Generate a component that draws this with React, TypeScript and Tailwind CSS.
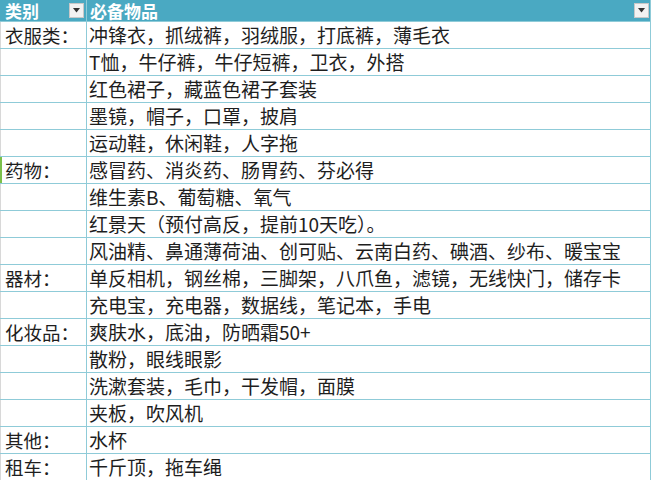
import React from "react";

const rows: [string, string][] = [
  ["衣服类：", "冲锋衣，抓绒裤，羽绒服，打底裤，薄毛衣"],
  ["", "T恤，牛仔裤，牛仔短裤，卫衣，外搭"],
  ["", "红色裙子，藏蓝色裙子套装"],
  ["", "墨镜，帽子，口罩，披肩"],
  ["", "运动鞋，休闲鞋，人字拖"],
  ["药物：", "感冒药、消炎药、肠胃药、芬必得"],
  ["", "维生素B、葡萄糖、氧气"],
  ["", "红景天（预付高反，提前10天吃）。"],
  ["", "风油精、鼻通薄荷油、创可贴、云南白药、碘酒、纱布、暖宝宝"],
  ["器材：", "单反相机，钢丝棉，三脚架，八爪鱼，滤镜，无线快门，储存卡"],
  ["", "充电宝，充电器，数据线，笔记本，手电"],
  ["化妆品：", "爽肤水，底油，防晒霜50+"],
  ["", "散粉，眼线眼影"],
  ["", "洗漱套装，毛巾，干发帽，面膜"],
  ["", "夹板，吹风机"],
  ["其他：", "水杯"],
  ["租车：", "千斤顶，拖车绳"],
];

function DropBtn() {
  return (
    <div className="w-[15px] h-[15px] bg-[#f2f2f2] border border-[#c8c8c8] flex items-center justify-center">
      <svg width="9" height="5" viewBox="0 0 9 5">
        <polygon points="1,0 8,0 4.5,4.5" fill="#333" />
      </svg>
    </div>
  );
}

export default function App() {
  return (
    <div
      className="w-[652px] h-[480px] bg-white overflow-hidden text-[#1e1e1e]"
      style={{ fontFamily: '"Noto Sans CJK SC", "Noto Sans", sans-serif' }}
    >
      <div className="w-[651px] border-r border-[#8fcbd8]">
        <div className="flex h-[22px] bg-[#4aa9c2] border-b border-[#8fcbd8] text-white font-bold text-[17px] leading-none">
          <div className="w-[87px] flex items-center justify-between pl-[5px] pr-[2px] border-r border-[#8fcbd8]">
            <span>类别</span>
            <DropBtn />
          </div>
          <div className="flex-1 flex items-center justify-between pl-[3px] pr-[1px]">
            <span>必备物品</span>
            <DropBtn />
          </div>
        </div>
        {rows.map(([a, b], i) => (
          <div
            key={i}
            className="flex h-[27px] border-b border-[#8fcbd8] text-[19px] leading-[26px]"
          >
            <div
              className={
                "w-[87px] border-r border-[#8fcbd8] whitespace-nowrap text-[18.5px] " +
                (i === 5 ? "border-l-2 border-l-[#7cc04a] pl-[3px]" : "border-l border-l-[#d8d8d8] pl-[4px]")
              }
            >
              {a}
            </div>
            <div className="flex-1 pl-[2px] whitespace-nowrap">{b}</div>
          </div>
        ))}
      </div>
    </div>
  );
}
